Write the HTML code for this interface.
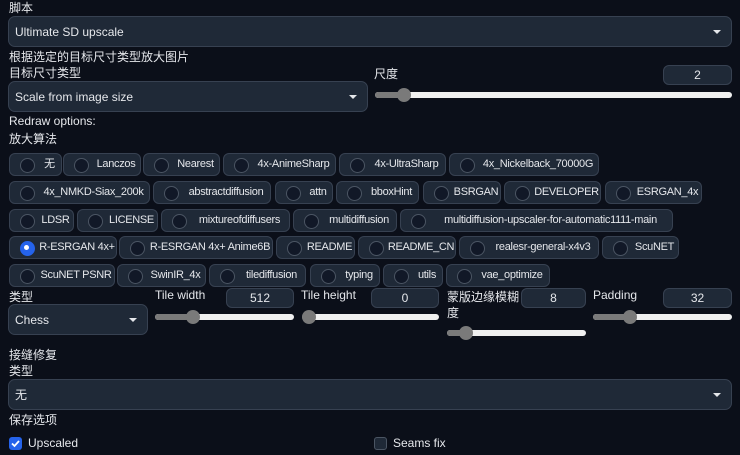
<!DOCTYPE html><html><head><meta charset="utf-8"><style>
*{box-sizing:border-box;margin:0;padding:0}
body{width:740px;height:455px;background:#0b0f19;color:#e5e7eb;font-family:"Liberation Sans","Noto Sans CJK SC",sans-serif;font-size:12px;position:relative;overflow:hidden}
.lbl{position:absolute;font-size:12px;color:#e5e7eb;white-space:nowrap}
.dd{position:absolute;background:#1f2937;border:1px solid #374151;border-radius:7px;padding-left:6px;display:flex;align-items:center;font-size:12px}
.dd:after{content:"";position:absolute;right:10px;top:50%;margin-top:-2px;border-left:4px solid transparent;border-right:4px solid transparent;border-top:4px solid #e5e7eb}
.num{position:absolute;background:#1f2937;border:1px solid #374151;border-radius:6px;text-align:center;font-size:12px;line-height:18px;height:20px}
.sl{position:absolute;height:6px;border-radius:3px;background:#f0f0f0}
.sl i{position:absolute;left:0;top:0;height:6px;border-radius:3px;background:#7a7a7a}
.sl b{position:absolute;top:-4px;width:14px;height:14px;border-radius:7px;background:#7a7a7a}
.c{position:absolute;height:23px;background:#1f2937;border:1px solid #374151;border-radius:6px;font-size:11px;letter-spacing:-0.3px;line-height:21px;padding-left:28px;text-align:center;white-space:nowrap;overflow:visible}
.c:before{content:"";position:absolute;left:10px;top:4px;width:13px;height:13px;border-radius:50%;border:1px solid #4b5563;background:#111827}
.c.on:before{background:#2563eb;border-color:#2563eb}
.c.on:after{content:"";position:absolute;left:14px;top:8px;width:5px;height:5px;border-radius:50%;background:#fff}
.cb{position:absolute;width:13px;height:13px;border-radius:3px}
</style></head><body>
<div class="lbl" style="left:9px;top:-1px">脚本</div>
<div class="dd" style="left:8px;top:16px;width:724px;height:31px">Ultimate SD upscale</div>
<div class="lbl" style="left:9px;top:48px">根据选定的目标尺寸类型放大图片</div>
<div class="lbl" style="left:9px;top:64px">目标尺寸类型</div>
<div class="dd" style="left:8px;top:81px;width:360px;height:31px">Scale from image size</div>
<div class="lbl" style="left:374px;top:65px">尺度</div>
<div class="num" style="left:663px;top:65px;width:69px">2</div>
<div class="sl" style="left:375px;top:92px;width:357px"><i style="width:30px"></i><b style="left:22px"></b></div>
<div class="lbl" style="left:9px;top:114px">Redraw options:</div>
<div class="lbl" style="left:9px;top:130px">放大算法</div>

<div class="c" style="left:9px;top:153px;width:53px">无</div>
<div class="c" style="left:63px;top:153px;width:78px">Lanczos</div>
<div class="c" style="left:143px;top:153px;width:77px">Nearest</div>
<div class="c" style="left:223px;top:153px;width:113px">4x-AnimeSharp</div>
<div class="c" style="left:339px;top:153px;width:107px">4x-UltraSharp</div>
<div class="c" style="left:449px;top:153px;width:150px">4x_Nickelback_70000G</div>

<div class="c" style="left:9px;top:181px;width:141px">4x_NMKD-Siax_200k</div>
<div class="c" style="left:153px;top:181px;width:118px">abstractdiffusion</div>
<div class="c" style="left:275px;top:181px;width:58px">attn</div>
<div class="c" style="left:336px;top:181px;width:83px">bboxHint</div>
<div class="c" style="left:423px;top:181px;width:78px">BSRGAN</div>
<div class="c" style="left:504px;top:181px;width:97px">DEVELOPER</div>
<div class="c" style="left:605px;top:181px;width:97px">ESRGAN_4x</div>

<div class="c" style="left:9px;top:209px;width:65px">LDSR</div>
<div class="c" style="left:77px;top:209px;width:81px">LICENSE</div>
<div class="c" style="left:161px;top:209px;width:129px">mixtureofdiffusers</div>
<div class="c" style="left:293px;top:209px;width:104px">multidiffusion</div>
<div class="c" style="left:400px;top:209px;width:273px">multidiffusion-upscaler-for-automatic1111-main</div>

<div class="c on" style="left:9px;top:236px;width:108px">R-ESRGAN 4x+</div>
<div class="c" style="left:119px;top:236px;width:154px">R-ESRGAN 4x+ Anime6B</div>
<div class="c" style="left:276px;top:236px;width:79px">README</div>
<div class="c" style="left:358px;top:236px;width:98px">README_CN</div>
<div class="c" style="left:459px;top:236px;width:140px">realesr-general-x4v3</div>
<div class="c" style="left:602px;top:236px;width:77px">ScuNET</div>

<div class="c" style="left:9px;top:264px;width:106px">ScuNET PSNR</div>
<div class="c" style="left:117px;top:264px;width:89px">SwinIR_4x</div>
<div class="c" style="left:209px;top:264px;width:97px">tilediffusion</div>
<div class="c" style="left:310px;top:264px;width:70px">typing</div>
<div class="c" style="left:383px;top:264px;width:60px">utils</div>
<div class="c" style="left:446px;top:264px;width:104px">vae_optimize</div>

<div class="lbl" style="left:9px;top:288px">类型</div>
<div class="dd" style="left:8px;top:304px;width:140px;height:31px">Chess</div>
<div class="lbl" style="left:155px;top:288px">Tile width</div>
<div class="num" style="left:226px;top:288px;width:68px">512</div>
<div class="sl" style="left:155px;top:314px;width:139px"><i style="width:40px"></i><b style="left:31px"></b></div>
<div class="lbl" style="left:301px;top:288px">Tile height</div>
<div class="num" style="left:371px;top:288px;width:68px">0</div>
<div class="sl" style="left:302px;top:314px;width:137px"><i style="width:10px"></i><b style="left:0"></b></div>
<div class="lbl" style="left:447px;top:288px">蒙版边缘模糊</div>
<div class="lbl" style="left:447px;top:304px">度</div>
<div class="num" style="left:521px;top:288px;width:65px">8</div>
<div class="sl" style="left:447px;top:330px;width:139px"><i style="width:24px"></i><b style="left:12px"></b></div>
<div class="lbl" style="left:593px;top:288px">Padding</div>
<div class="num" style="left:663px;top:288px;width:69px">32</div>
<div class="sl" style="left:593px;top:314px;width:139px"><i style="width:40px"></i><b style="left:30px"></b></div>

<div class="lbl" style="left:9px;top:346px">接缝修复</div>
<div class="lbl" style="left:9px;top:362px">类型</div>
<div class="dd" style="left:8px;top:379px;width:724px;height:31px">无</div>
<div class="lbl" style="left:9px;top:411px">保存选项</div>
<div class="cb" style="left:9px;top:437px;background:#2563eb"><svg width="13" height="13" viewBox="0 0 13 13"><path d="M3 6.5l2.5 2.5 4.5-5" stroke="#fff" stroke-width="1.8" fill="none"/></svg></div>
<div class="lbl" style="left:28px;top:436px">Upscaled</div>
<div class="cb" style="left:374px;top:437px;background:#1f2937;border:1px solid #4b5563"></div>
<div class="lbl" style="left:393px;top:436px">Seams fix</div>
</body></html>
